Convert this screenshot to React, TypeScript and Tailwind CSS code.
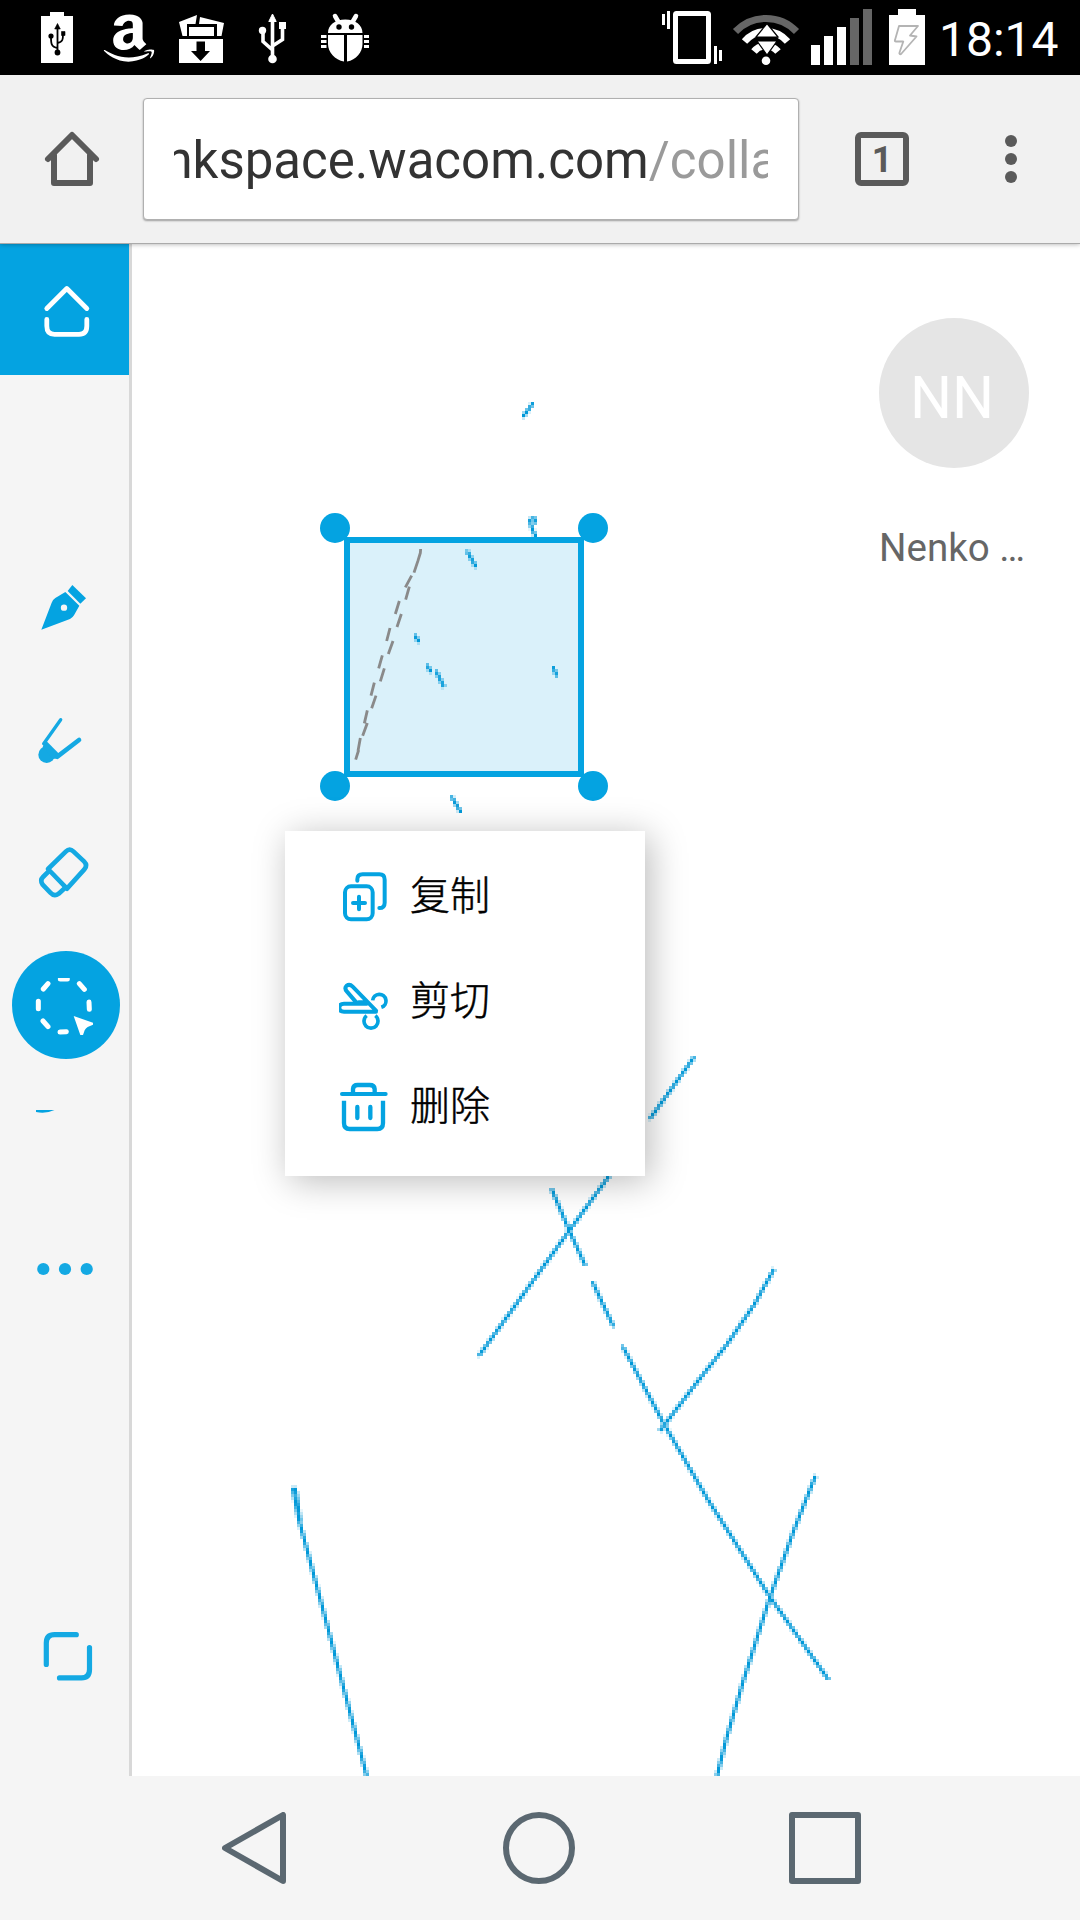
import React from "react";
import { FaAmazon } from "react-icons/fa";

type Point = [number, number];

const CELL = 3;
const CANVAS_X = 132;
const CANVAS_Y = 243;

// Ink strokes, in screen coordinates.
const strokes: Point[][] = [
  [[532.5, 404], [523.5, 416]],
  [[535.5, 522], [534, 518], [530, 520], [531, 525], [533, 531], [535.5, 536]],
  [[467.5, 552], [475.5, 566]],
  [[415, 636], [418.5, 641]],
  [[427.5, 666], [430.5, 671]],
  [[436.5, 672], [440, 679], [443.5, 686]],
  [[553.5, 668], [556.5, 675]],
  [[452, 797.5], [460.5, 811.5]],
  [[693.5, 1058], [650.5, 1118]],
  [[612, 1172], [569, 1231], [479.5, 1355]],
  [[552, 1190], [569, 1230], [585, 1265]],
  [[593, 1283], [613, 1325.5]],
  [[623, 1347], [664, 1424], [707.5, 1499], [770, 1597], [828, 1679]],
  [[773.5, 1270], [754, 1305], [726.5, 1345], [698, 1381], [660.5, 1430]],
  [[815, 1477], [794, 1530], [770, 1597], [743, 1682], [726, 1740], [717, 1776]],
  [[293, 1489], [299, 1520], [321, 1602], [367, 1777]],
  [[295.5, 1489], [300, 1520]],
];

const dashes =
  "M362 507L361 519L354 542L342 578M335 587L316 622M328 620L317 659M298 663L286 702M304 702L291 741M270 744L260 783M279 783L265 822M247 826L236 865M253 865L241 904M223 908L213 947M228 947L215 985M202 991L193 1030M202 1029L188 1067M181 1074L174 1113M176 1110L167 1139";

function distance(px: number, py: number, a: Point, b: Point) {
  const dx = b[0] - a[0];
  const dy = b[1] - a[1];
  const t = Math.max(0, Math.min(1, ((px - a[0]) * dx + (py - a[1]) * dy) / (dx * dx + dy * dy)));
  return Math.hypot(px - a[0] - t * dx, py - a[1] - t * dy);
}

// Rasterises the strokes to the coarse grid of the drawing surface.
function rasterise() {
  const cells = new Map<string, { x: number; y: number; o: number }>();
  for (const s of strokes) {
    for (let i = 0; i + 1 < s.length; i++) {
      const a = s[i];
      const b = s[i + 1];
      const x0 = Math.floor(Math.min(a[0], b[0]) / CELL) - 1;
      const x1 = Math.floor(Math.max(a[0], b[0]) / CELL) + 1;
      const y0 = Math.floor(Math.min(a[1], b[1]) / CELL) - 1;
      const y1 = Math.floor(Math.max(a[1], b[1]) / CELL) + 1;
      for (let cx = x0; cx <= x1; cx++) {
        for (let cy = y0; cy <= y1; cy++) {
          const d = distance((cx + 0.5) * CELL, (cy + 0.5) * CELL, a, b) / CELL;
          const o = Math.min(1, 1.12 - d * 1.08);
          if (o < 0.08) continue;
          const key = cx + "," + cy;
          const prev = cells.get(key);
          if (!prev || prev.o < o) cells.set(key, { x: cx * CELL, y: cy * CELL, o });
        }
      }
    }
  }
  return [...cells.values()];
}

const ink = rasterise();

function StatusBar() {
  return (
    <header className="flex h-[75px] shrink-0 items-center bg-black">
      <svg width="939" height="75" viewBox="0 0 939 75" className="shrink-0" fill="#fff">
        <path d="M50 12H64V16H73V63H41V16H50Z" />
        <g stroke="#000" strokeWidth="1.8" fill="none">
          <path d="M57.5 52V27M57.5 48C51 47 51 43 51 37M57.5 43C63 42 63 39 63 34" />
          <path d="M57.5 23.5L60.3 29H54.7ZM61.5 31.5H65V35.5H61.5Z" fill="#000" strokeWidth=".6" />
          <circle cx="57.5" cy="52.5" r="2" fill="#000" />
          <circle cx="51" cy="36" r="1.7" fill="#000" />
        </g>
        <FaAmazon x="103" y="11" className="h-[54px] w-[52px]" color="#fff" preserveAspectRatio="none" />
        <path d="M179 22L197 15L195.5 24H187V36H182.500ZM200 17L224 23L221.500 36H217V24H199ZM189 27H214V36H189Z" />
        <path d="M179 39H223V63H179ZM196.500 41.500V51H191L200.600 61L210 51H205V41.500Z" fillRule="evenodd" />
        <g stroke="#fff" strokeWidth="3.600" fill="none">
          <path d="M272.500 60V20M272.500 50L263 41.500V31M272.500 46L282.500 39.500V27" />
          <path d="M272.500 14L276.200 21.500H268.800Z" strokeWidth="1" fill="#fff" />
          <circle cx="272.500" cy="59" r="4.300" fill="#fff" stroke="none" />
          <circle cx="262.500" cy="30.500" r="3.700" fill="#fff" stroke="none" />
          <path d="M279 22H286V29H279Z" fill="#fff" stroke="none" />
        </g>
        <path d="M328 33C328 25 335 19.500 345.300 19.500C355.500 19.500 362.500 25 362.500 33ZM328 35H344V61.500C335 60 328 52 328 44ZM347 35H362.500V44C362.500 52 356 60 347 61.500Z" />
        <path d="M335 16L338.500 22M356 16L352.500 22" stroke="#fff" strokeWidth="4.500" strokeLinecap="round" />
        <path d="M321 35H326.500V38H321ZM321 40H326.500V43H321ZM321 45H326.500V48H321ZM364 35H369V38H364ZM364 40H369V43H364ZM364 45H369V48H364Z" />
        <circle cx="339" cy="27" r="2.700" fill="#000" />
        <circle cx="351.500" cy="27" r="2.700" fill="#000" />

        <rect x="675.500" y="13.500" width="33" height="48" rx="1" fill="none" stroke="#fff" strokeWidth="5" />
        <path d="M662 14H665V25H662ZM667 11H670V29H667ZM714 46H717V64H714ZM719 50H722V61H719Z" />
        <path d="M735.500 31.500C752 14 780 14 796.500 31.500" fill="none" stroke="#666" strokeWidth="7" />
        <path d="M744.500 41.500C756 28 776 28 787.500 41.500" fill="none" stroke="#fff" strokeWidth="7" />
        <path d="M754 51.500C760 44 772 44 778 51.500" fill="none" stroke="#fff" strokeWidth="7" />
        <path d="M767 23.500L778 37H756ZM757 41H777L767 55Z" stroke="#000" strokeWidth="1.200" />
        <path d="M752 39H782" stroke="#000" strokeWidth="3.500" strokeDasharray="0 4 22 4" />
        <circle cx="766" cy="60.700" r="4.300" />
        <path d="M811 45H820V65H811ZM824 36H833V65H824ZM837 27H846V65H837Z" />
        <path d="M850 18H859V65H850ZM863 9H872V65H863Z" fill="#666" />
        <path d="M898 9H916V15H925V65H889V15H898Z" />
        <path d="M899 26H918L910 35.500L916.500 36.500L901.500 53.500C900 55 899 54 899.500 52.500L903.300 41.500H896C895 41.500 894.500 41 895 40Z" fill="none" stroke="#b4b4b4" strokeWidth="1.800" strokeLinejoin="round" />
      </svg>
      <span className="pt-1 text-[48px] leading-none text-white">18:14</span>
    </header>
  );
}

function BrowserBar() {
  return (
    <div className="relative z-10 flex h-[168px] shrink-0 items-center bg-[#f1f1f1] shadow-[0_1px_0_#aaaaaa,0_1px_5px_rgba(0,0,0,0.35)]">
      <svg width="143" height="168" viewBox="0 75 143 168" className="shrink-0" fill="none" stroke="#5a5a5a" strokeWidth="6" strokeLinejoin="round" strokeLinecap="round">
        <path d="M48 159L72 135L96 159M54 155V183H90V155" />
      </svg>
      <div className="flex h-[122px] w-[656px] shrink-0 items-center rounded-[4px] border border-[#b0b0b0] bg-white px-[30px] shadow-[0_1px_2px_rgba(0,0,0,0.35)]">
        <div className="flex h-[72px] w-full justify-start overflow-hidden">
          <span className="-ml-[22px] whitespace-nowrap text-[51px] leading-[76px] text-[#333333]">
            inkspace.wacom.com<span className="text-[#9a9a9a]">/colla</span>
          </span>
        </div>
      </div>
      <div className="ml-14 flex size-[54px] items-center justify-center rounded-[6px] border-[6px] border-[#5a5a5a] pt-0.5 text-[36px] leading-none font-bold text-[#5a5a5a]">
        1
      </div>
      <div className="ml-24 flex flex-col gap-1.5">
        <i className="size-3 rounded-full bg-[#5a5a5a]" />
        <i className="size-3 rounded-full bg-[#5a5a5a]" />
        <i className="size-3 rounded-full bg-[#5a5a5a]" />
      </div>
    </div>
  );
}

function Tool({ box, children }: { box: string; children: React.ReactNode }) {
  return (
    <button className="block h-[132px] w-[129px] shrink-0">
      <svg width="129" height="132" viewBox={box}>
        {children}
      </svg>
    </button>
  );
}

function Sidebar() {
  return (
    <nav className="flex w-[132px] shrink-0 flex-col border-r-[3px] border-[#d8d8d8] bg-[#f5f5f5]">
      <div className="h-[132px] shrink-0 bg-[#04a3e1]">
        <Tool box="0 243 129 132">
          <path d="M46.800 308.500L66.800 288.500L86.800 308.500M46.800 319.500V326Q46.800 334.300 54.500 334.300H79Q86.800 334.300 86.800 326V319.500" fill="none" stroke="#fff" strokeWidth="4.800" strokeLinecap="round" strokeLinejoin="round" />
        </Tool>
      </div>
      <div className="mt-[168px] flex flex-col">
        <Tool box="0 543 129 132">
          <g transform="translate(0 560) scale(.33333)" fill="#04a3e1">
            <path d="M124 209L155 128Q158 119 166 114L196 96L238 137L222 166Q218 173 210 177Z" />
            <path d="M203 93L217 75L258 115L241 131Z" />
            <circle cx="192" cy="143" r="9.500" fill="#f5f5f5" />
          </g>
        </Tool>
        <Tool box="0 675 129 132">
          <g transform="translate(0 560) scale(.33333)" fill="#14a9e3" stroke="#14a9e3" strokeLinecap="round">
            <circle cx="140" cy="584" r="25" stroke="none" />
            <path d="M131 552L140 544L180 584L171 596L160 596L128 562Z" stroke="none" />
            <path d="M182 479L131 551" strokeWidth="10" />
            <path d="M237 540L172 590" strokeWidth="14" />
          </g>
        </Tool>
        <Tool box="0 807 129 132">
          <g transform="translate(0 560) scale(.33333)" fill="none" stroke="#14a9e3" strokeWidth="14" strokeLinejoin="round">
            <path d="M144 927L198 874Q209 863 220 874L252 904Q264 916 253 928L201 986Z" />
            <path d="M149 931L129 951Q119 961 128 974L151 998Q163 1011 176 1001L198 981" />
          </g>
        </Tool>
        <Tool box="0 939 129 132">
          <circle cx="66" cy="1005" r="54" fill="#04a3e1" />
          <g transform="translate(0 930) scale(.33333)" stroke="#fff" strokeWidth="15" strokeLinecap="round" fill="#fff">
            <path d="M181 147H202M144 161L130 177M238 161L253 178M115 214V236M267 216L268 238M129 273L144 290M180 306L199 305" />
            <path d="M221 258L279 278V284L263 291Q257 295 254 301L249 315H241Z" stroke="none" />
          </g>
          <path d="M57 976H71V978H57Z" fill="#04a3e1" />
        </Tool>
        <Tool box="0 1071 129 132">
          <path d="M36 1110H54.500Q46 1114 36 1112Z" fill="#04a3e1" />
        </Tool>
        <Tool box="0 1203 129 132">
          <g fill="#14a9e3">
            <circle cx="43.300" cy="1269" r="6.100" />
            <circle cx="65" cy="1269" r="6.100" />
            <circle cx="86.700" cy="1269" r="6.100" />
          </g>
        </Tool>
      </div>
      <div className="mt-auto mb-[54px] flex">
        <Tool box="0 1590 129 132">
          <path d="M46.300 1664.500V1643Q46.300 1634.700 54.500 1634.700H76.300M89.500 1647.500V1669.500Q89.500 1677.900 81.500 1677.900H59.500" fill="none" stroke="#14a9e3" strokeWidth="5.200" strokeLinecap="round" />
        </Tool>
      </div>
    </nav>
  );
}

function MenuItem({ label, box, children }: { label: string; box: string; children: React.ReactNode }) {
  return (
    <button className="flex h-[105px] items-center">
      <svg width="60" height="60" viewBox={box} className="shrink-0" fill="none" stroke="#04a3e1" strokeWidth="12" strokeLinecap="round" strokeLinejoin="round">
        {children}
      </svg>
      <span className="-mt-1 ml-[11px] text-[40px] leading-none font-light text-black [-webkit-text-stroke:0.5px_black]">{label}</span>
    </button>
  );
}

function ContextMenu() {
  return (
    <div className="absolute top-[588px] left-[153px] flex h-[345px] w-[360px] flex-col bg-white py-[15px] pl-[54px] shadow-[5px_5px_34px_rgba(0,0,0,0.27)]">
      <MenuItem label="复制" box="207 175 180 180">
        <path d="M262 210V206Q262 191 278 191H328Q344 191 344 207V276Q344 292 328 292" />
        <rect x="225" y="227" width="83" height="99" rx="18" />
        <path d="M267 258V296M249 277H285" />
      </MenuItem>
      <MenuItem label="剪切" box="207 490 180 180">
        <path d="M318 603H222Q208 603 208 592Q208 579 222 579H290M262 579L231 543Q222 533 230 525Q239 519 248 528L318 600M266 575H288" />
        <path d="M308 569A20 20 0 1 1 334 590M290 615A21 21 0 1 0 316 615" strokeLinecap="butt" strokeWidth="11" />
      </MenuItem>
      <MenuItem label="删除" box="207 805 180 180">
        <path d="M216 850H347" />
        <path d="M249 846V835Q250 823 263 823H299Q313 823 314 835V846" strokeLinecap="butt" strokeWidth="13" />
        <path d="M222 870V937Q222 955 239 955H322Q339 955 339 937V870" strokeLinecap="butt" strokeWidth="13" />
        <path d="M262 889V922M301 889V922" strokeWidth="13" />
      </MenuItem>
    </div>
  );
}

function Board() {
  return (
    <main className="relative min-w-0 flex-1 overflow-hidden bg-white">
      <svg width="948" height="1533" viewBox={`${CANVAS_X} ${CANVAS_Y} 948 1533`} className="block">
        <rect x="347" y="540" width="234" height="234" fill="#daf1fa" />
        <g fill="#0098d8" shapeRendering="crispEdges">
          {ink.map((c, i) => (
            <rect key={i} x={c.x} y={c.y} width={CELL} height={CELL} opacity={c.o} />
          ))}
        </g>
        <rect x="347" y="540" width="234" height="234" fill="none" stroke="#04a3e1" strokeWidth="6" />
        <g fill="#04a3e1">
          <circle cx="335" cy="528" r="15" />
          <circle cx="593" cy="528" r="15" />
          <circle cx="335" cy="786" r="15" />
          <circle cx="593" cy="786" r="15" />
        </g>
        <path d={dashes} transform="translate(300 380) scale(.33333)" fill="none" stroke="#8a8a8a" strokeWidth="8.500" />
      </svg>
      <div className="absolute top-[75px] left-[747px] w-[150px]">
        <div className="flex size-[150px] items-center justify-center rounded-full bg-[#e5e5e5] pt-2 pr-1 text-[59px] leading-none text-white">NN</div>
        <div className="mt-14 truncate text-[38.500px] leading-[48px] text-[#666666]">Nenko …</div>
      </div>
      <ContextMenu />
    </main>
  );
}

function NavigationBar() {
  return (
    <footer className="flex h-36 shrink-0 items-center bg-[#f5f5f5] pl-[222px]">
      <svg width="64" height="72" viewBox="0 0 64 72" fill="none" stroke="#5b6871" strokeWidth="6" strokeLinejoin="round">
        <path d="M61 3V69L3 36Z" />
      </svg>
      <div className="ml-[217px] size-[72px] rounded-full border-[6px] border-[#5b6871]" />
      <div className="ml-[214px] size-[72px] rounded-[3px] border-[6px] border-[#5b6871]" />
    </footer>
  );
}

export default function App() {
  return (
    <div className="flex h-[1920px] w-[1080px] flex-col overflow-hidden bg-white font-[Roboto,'Noto_Sans_CJK_SC',sans-serif]">
      <StatusBar />
      <BrowserBar />
      <div className="flex min-h-0 flex-1">
        <Sidebar />
        <Board />
      </div>
      <NavigationBar />
    </div>
  );
}
